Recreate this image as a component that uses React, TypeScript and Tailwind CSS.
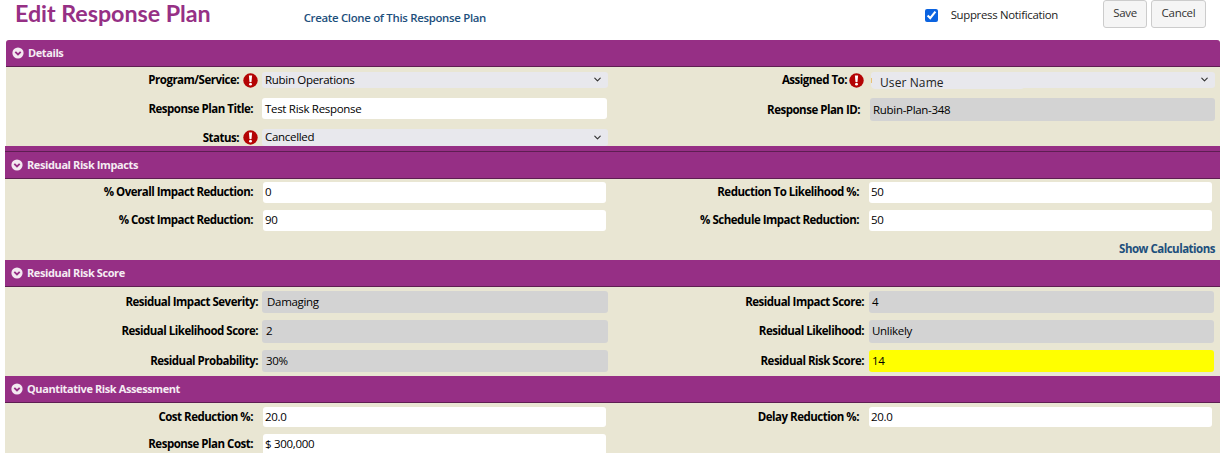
import React from "react";
import { ChevronDown } from "lucide-react";

function SectionHeader({ title }: { title: string }) {
  return (
    <div className="h-[27px] bg-[#962f85] border-b border-[#5e1e52] flex items-center pl-[6px] gap-[4px] text-[#f5ecf3] font-bold text-[11px] tracking-[-0.4px]">
      <svg width="12" height="12" viewBox="0 0 12 12">
        <circle cx="6" cy="6" r="5.6" fill="#f3e9f1" />
        <path d="M3.3 4.8 6 7.5l2.7-2.7" fill="none" stroke="#962f85" strokeWidth="1.8" />
      </svg>
      {title}
    </div>
  );
}

function Required() {
  return (
    <svg width="15" height="15" viewBox="0 0 15 15" className="shrink-0">
      <circle cx="7.5" cy="7.5" r="7.2" fill="#b40404" />
      <path d="M5.9 2.5h3.2l-.6 6.5H6.5z" fill="#fff" />
      <circle cx="7.5" cy="11.2" r="1.4" fill="#fff" />
    </svg>
  );
}

function Field({
  label,
  value,
  kind = "input",
  required,
  flush,
  labelClass,
  boxClass = "",
}: {
  label: string;
  value: React.ReactNode;
  kind?: "input" | "select" | "readonly" | "yellow";
  required?: boolean;
  // the Details rows sit a pixel lower in their boxes than the other sections
  flush?: boolean;
  labelClass: string;
  boxClass?: string;
}) {
  const bg =
    kind === "input"
      ? flush
        ? "bg-white"
        : "bg-white pb-[1px]"
      : kind === "select"
        ? "bg-[#e8e8ed] pb-[1px]"
        : kind === "yellow"
          ? "bg-[#ffff00]"
          : "bg-[#d3d3d3]";
  return (
    <div className="flex items-center">
      <div className={`${labelClass} ${flush ? "" : "pb-[1px]"} h-[16px] shrink-0 flex items-center justify-end font-bold text-[11.5px] tracking-[-0.5px] text-black`}>
        {label}
        {required && <Required />}
      </div>
      <div className={`${bg} ${boxClass} relative flex-1 rounded-[3px] flex items-center justify-between pr-[5px] text-[11.5px] text-black`}>
        {value}
        {kind === "select" && <ChevronDown size={11} strokeWidth={2.5} className="text-[#333]" />}
      </div>
    </div>
  );
}

export default function App() {
  return (
    <div className="w-[1229px] h-[453px] overflow-hidden bg-white font-['Open_Sans','Liberation_Sans',sans-serif] tracking-[-0.3px]">
      <div className="h-[40px] flex items-start">
        <h1 className="ml-[15px] text-[23.3px] leading-[26px] font-bold text-[#963085] tracking-[-0.05px] font-['Lato',sans-serif] whitespace-nowrap">
          Edit Response Plan
        </h1>
        <a className="ml-[93px] mt-[9px] text-[11.4px] font-semibold text-[#1d4f7c] whitespace-nowrap">
          Create Clone of This Response Plan
        </a>
        <div className="ml-auto flex items-center mt-[6px]">
          <input type="checkbox" defaultChecked className="w-[13px] h-[13px] accent-[#0b63e0]" />
          <span className="ml-[13px] mb-[1px] text-[11.4px] text-[#222]">Suppress Notification</span>
        </div>
        <div className="flex gap-[4px] ml-[45px] mr-[23px]">
          <button className="h-[28px] w-[44px] pb-[2px] bg-[#f5f5f5] border border-[#ccc] rounded-[3px] text-[11.5px] text-[#333]">Save</button>
          <button className="h-[28px] w-[55px] pb-[2px] bg-[#f5f5f5] border border-[#ccc] rounded-[3px] text-[11.5px] text-[#333]">Cancel</button>
        </div>
      </div>

      <div className="ml-[6px] w-[1214px] bg-[#e9e6d3] rounded-t-[3px] overflow-hidden">
        <SectionHeader title="Details" />
        <div className="h-[79px] grid grid-cols-[602px_1fr] pt-[5px]">
          <div className="flex flex-col gap-[10px]">
            <Field flush label="Program/Service:" value="Rubin Operations" kind="select" required labelClass="w-[256px] pr-[4px] gap-[4px]" boxClass="h-[16px] pl-[3px]" />
            <Field flush label="Response Plan Title:" value="Test Risk Response" labelClass="w-[256px] pr-[9px]" boxClass="h-[21px] pl-[3px] mr-[1px]" />
            <Field flush label="Status:" value="Cancelled" kind="select" required labelClass="w-[256px] pr-[4px] gap-[4px]" boxClass="h-[17px] pl-[3px]" />
          </div>
          <div className="flex flex-col gap-[10px] pr-[5px]">
            <Field
              flush
              label="Assigned To:"
              kind="select"
              required
              labelClass="w-[263px] pr-[7px] gap-[2px]"
              boxClass="h-[16px] pl-[3px]"
              value={
                <>
                  <span className="absolute left-0 top-[6px] w-[1px] h-[5px] bg-[#e8c078]" />
                  <span className="absolute left-[1px] top-[1px] h-[16px] w-[152px] bg-[#e8e8ed] rounded-b-[3px] pl-[8px] text-[12px] tracking-[0.1px] text-[#222] leading-[19px]">
                    User Name
                  </span>
                  <span />
                </>
              }
            />
            <Field flush label="Response Plan ID:" value="Rubin-Plan-348" kind="readonly" labelClass="w-[262px] pr-[10px]" boxClass="h-[23px] pl-[3px]" />
          </div>
        </div>
      </div>

      <div className="ml-[5px] w-[1215px] bg-[#e9e6d3]">
        <div className="h-[5px] bg-[#962f85]" />
        <div className="h-[1px] bg-[#5e1e52]" />
        <SectionHeader title="Residual Risk Impacts" />
        <div className="h-[81px] pt-[3px]">
          <div className="grid grid-cols-[601px_1fr]">
            <div className="flex flex-col gap-[7px]">
              <Field label="% Overall Impact Reduction:" value="0" labelClass="w-[258px] pr-[10px]" boxClass="h-[21px] pl-[2px]" />
              <Field label="% Cost Impact Reduction:" value="90" labelClass="w-[258px] pr-[10px]" boxClass="h-[21px] pl-[2px]" />
            </div>
            <div className="flex flex-col gap-[7px] pr-[8px]">
              <Field label="Reduction To Likelihood %:" value="50" labelClass="w-[263px] pr-[10px]" boxClass="h-[21px] pl-[2px]" />
              <Field label="% Schedule Impact Reduction:" value="50" labelClass="w-[263px] pr-[10px]" boxClass="h-[21px] pl-[2px]" />
            </div>
          </div>
          <div className="mt-[9px] text-right pr-[5px] text-[11.5px] tracking-[-0.5px] font-bold text-[#1d4f7c]">Show Calculations</div>
        </div>

        <SectionHeader title="Residual Risk Score" />
        <div className="h-[89px] grid grid-cols-[603px_1fr] pt-[4px]">
          <div className="flex flex-col gap-[7px]">
            <Field label="Residual Impact Severity:" value="Damaging" kind="readonly" labelClass="w-[257px] pr-[4px]" boxClass="h-[22px] pl-[5px]" />
            <Field label="Residual Likelihood Score:" value="2" kind="readonly" labelClass="w-[257px] pr-[4px]" boxClass="h-[23px] pl-[4px] pb-[1px]" />
            <Field label="Residual Probability:" value="30%" kind="readonly" labelClass="w-[257px] pr-[4px]" boxClass="h-[22px] pl-[4px]" />
          </div>
          <div className="flex flex-col gap-[7px] pr-[6px]">
            <Field label="Residual Impact Score:" value="4" kind="readonly" labelClass="w-[261px] pr-[5px]" boxClass="h-[22px] pl-[3px]" />
            <Field label="Residual Likelihood:" value="Unlikely" kind="readonly" labelClass="w-[261px] pr-[5px]" boxClass="h-[23px] pl-[3px] pb-[1px]" />
            <Field label="Residual Risk Score:" value="14" kind="yellow" labelClass="w-[261px] pr-[5px]" boxClass="h-[22px] pl-[3px]" />
          </div>
        </div>

        <SectionHeader title="Quantitative Risk Assessment" />
        <div className="h-[50px] grid grid-cols-[601px_1fr] pt-[4px]">
          <div className="flex flex-col gap-[7px]">
            <Field label="Cost Reduction %:" value="20.0" labelClass="w-[258px] pr-[10px]" boxClass="h-[20px] pl-[2px]" />
            <Field label="Response Plan Cost:" value="$ 300,000" labelClass="w-[258px] pr-[10px]" boxClass="h-[21px] pl-[2px]" />
          </div>
          <div className="pr-[8px]">
            <Field label="Delay Reduction %:" value="20.0" labelClass="w-[263px] pr-[10px]" boxClass="h-[20px] pl-[2px]" />
          </div>
        </div>
      </div>
    </div>
  );
}
